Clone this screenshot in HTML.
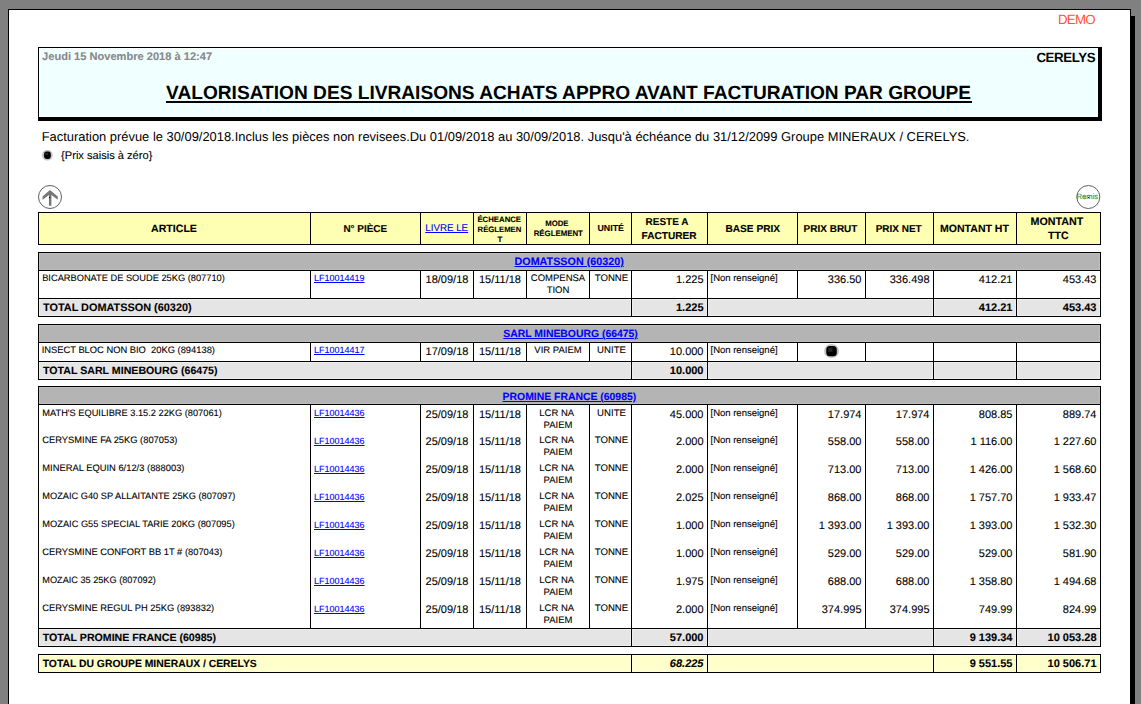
<!DOCTYPE html>
<html><head><meta charset="utf-8"><title>Valorisation</title>
<style>
html,body{margin:0;padding:0;}
body{width:1141px;height:704px;overflow:hidden;background:#808080;position:relative;font-family:"Liberation Sans", sans-serif;}
body div{position:absolute;}
.t{white-space:nowrap;line-height:1.15;text-rendering:geometricPrecision;}
</style></head><body>
<div style="left:8px;top:9px;width:1123px;height:704px;background:#fff;border:1px solid #000;box-sizing:border-box"></div>
<div style="left:1131px;top:16px;width:4px;height:700px;background:#000"></div>
<div style="left:38px;top:47px;width:1064px;height:74px;background:#F0FFFF;border-style:solid;border-color:#000;border-width:1px 4px 4px 1px;box-sizing:border-box;box-shadow:inset 1px 1px 0 #fff, inset -1px -1px 0 #fff"></div>
<div style="left:166px;top:101px;width:806px;height:2px;background:#000"></div>
<svg style="position:absolute;left:41px;top:149px" width="13" height="13" viewBox="0 0 13 13">
<ellipse cx="6.4" cy="6.2" rx="5.4" ry="5.4" fill="#c4c4c4"/>
<rect x="3.1" y="2.5" width="6.7" height="7.4" rx="2.4" fill="#000"/>
<rect x="4.2" y="3.6" width="3" height="2.6" fill="#262626"/>
</svg>
<svg style="position:absolute;left:37px;top:184px" width="26" height="26" viewBox="0 0 26 26">
<circle cx="13" cy="13" r="11.5" fill="none" stroke="#606060" stroke-width="1"/>
<path d="M12.94 6 L20.76 12.4 L20.76 15.8 L14.4 10.95 L14.4 21.75 L11.95 21.75 L11.95 10.95 L5.56 15.8 L5.56 12.4 Z" fill="#777"/>
<rect x="12" y="13" width="1.2" height="1.2" fill="#00f"/>
</svg>
<svg style="position:absolute;left:1075px;top:184px" width="26" height="26" viewBox="0 0 26 26">
<circle cx="13.3" cy="13" r="11.5" fill="none" stroke="#606060" stroke-width="1"/>
<rect x="13" y="13" width="1.2" height="1.2" fill="#00f"/>
</svg>
<div style="left:38px;top:212px;width:1062px;height:32px;background:#FFFFB4"></div>
<div style="left:38px;top:212px;width:1063px;height:1px;background:#000"></div>
<div style="left:38px;top:244px;width:1063px;height:1px;background:#000"></div>
<div style="left:38px;top:212px;width:1px;height:33px;background:#000"></div>
<div style="left:310px;top:212px;width:1px;height:33px;background:#000"></div>
<div style="left:420px;top:212px;width:1px;height:33px;background:#000"></div>
<div style="left:473px;top:212px;width:1px;height:33px;background:#000"></div>
<div style="left:526px;top:212px;width:1px;height:33px;background:#000"></div>
<div style="left:589px;top:212px;width:1px;height:33px;background:#000"></div>
<div style="left:631px;top:212px;width:1px;height:33px;background:#000"></div>
<div style="left:707px;top:212px;width:1px;height:33px;background:#000"></div>
<div style="left:797px;top:212px;width:1px;height:33px;background:#000"></div>
<div style="left:865px;top:212px;width:1px;height:33px;background:#000"></div>
<div style="left:933px;top:212px;width:1px;height:33px;background:#000"></div>
<div style="left:1016px;top:212px;width:1px;height:33px;background:#000"></div>
<div style="left:1100px;top:212px;width:1px;height:33px;background:#000"></div>
<div style="left:39px;top:253px;width:1061px;height:17px;background:#B4B4B4;box-shadow:inset 0 0 0 1px #bdbdbd"></div>
<div style="left:38px;top:252px;width:1063px;height:1px;background:#000"></div>
<div style="left:38px;top:270px;width:1063px;height:1px;background:#000"></div>
<div style="left:38px;top:252px;width:1px;height:19px;background:#000"></div>
<div style="left:1100px;top:252px;width:1px;height:19px;background:#000"></div>
<div style="left:38px;top:270px;width:1px;height:29px;background:#000"></div>
<div style="left:310px;top:270px;width:1px;height:29px;background:#000"></div>
<div style="left:420px;top:270px;width:1px;height:29px;background:#000"></div>
<div style="left:473px;top:270px;width:1px;height:29px;background:#000"></div>
<div style="left:526px;top:270px;width:1px;height:29px;background:#000"></div>
<div style="left:589px;top:270px;width:1px;height:29px;background:#000"></div>
<div style="left:631px;top:270px;width:1px;height:29px;background:#000"></div>
<div style="left:707px;top:270px;width:1px;height:29px;background:#000"></div>
<div style="left:797px;top:270px;width:1px;height:29px;background:#000"></div>
<div style="left:865px;top:270px;width:1px;height:29px;background:#000"></div>
<div style="left:933px;top:270px;width:1px;height:29px;background:#000"></div>
<div style="left:1016px;top:270px;width:1px;height:29px;background:#000"></div>
<div style="left:1100px;top:270px;width:1px;height:29px;background:#000"></div>
<div style="left:38px;top:298px;width:1063px;height:1px;background:#000"></div>
<div style="left:39px;top:299px;width:592px;height:17px;background:#E5E5E5;box-shadow:inset 0 0 0 1px #eeeeee"></div>
<div style="left:632px;top:299px;width:75px;height:17px;background:#E5E5E5;box-shadow:inset 0 0 0 1px #eeeeee"></div>
<div style="left:708px;top:299px;width:225px;height:17px;background:#E5E5E5;box-shadow:inset 0 0 0 1px #eeeeee"></div>
<div style="left:934px;top:299px;width:82px;height:17px;background:#E5E5E5;box-shadow:inset 0 0 0 1px #eeeeee"></div>
<div style="left:1017px;top:299px;width:83px;height:17px;background:#E5E5E5;box-shadow:inset 0 0 0 1px #eeeeee"></div>
<div style="left:38px;top:298px;width:1063px;height:1px;background:#000"></div>
<div style="left:38px;top:316px;width:1063px;height:1px;background:#000"></div>
<div style="left:38px;top:298px;width:1px;height:19px;background:#000"></div>
<div style="left:631px;top:298px;width:1px;height:19px;background:#000"></div>
<div style="left:707px;top:298px;width:1px;height:19px;background:#000"></div>
<div style="left:933px;top:298px;width:1px;height:19px;background:#000"></div>
<div style="left:1016px;top:298px;width:1px;height:19px;background:#000"></div>
<div style="left:1100px;top:298px;width:1px;height:19px;background:#000"></div>
<div style="left:39px;top:325px;width:1061px;height:17px;background:#B4B4B4;box-shadow:inset 0 0 0 1px #bdbdbd"></div>
<div style="left:38px;top:324px;width:1063px;height:1px;background:#000"></div>
<div style="left:38px;top:342px;width:1063px;height:1px;background:#000"></div>
<div style="left:38px;top:324px;width:1px;height:19px;background:#000"></div>
<div style="left:1100px;top:324px;width:1px;height:19px;background:#000"></div>
<div style="left:38px;top:342px;width:1px;height:20px;background:#000"></div>
<div style="left:310px;top:342px;width:1px;height:20px;background:#000"></div>
<div style="left:420px;top:342px;width:1px;height:20px;background:#000"></div>
<div style="left:473px;top:342px;width:1px;height:20px;background:#000"></div>
<div style="left:526px;top:342px;width:1px;height:20px;background:#000"></div>
<div style="left:589px;top:342px;width:1px;height:20px;background:#000"></div>
<div style="left:631px;top:342px;width:1px;height:20px;background:#000"></div>
<div style="left:707px;top:342px;width:1px;height:20px;background:#000"></div>
<div style="left:797px;top:342px;width:1px;height:20px;background:#000"></div>
<div style="left:865px;top:342px;width:1px;height:20px;background:#000"></div>
<div style="left:933px;top:342px;width:1px;height:20px;background:#000"></div>
<div style="left:1016px;top:342px;width:1px;height:20px;background:#000"></div>
<div style="left:1100px;top:342px;width:1px;height:20px;background:#000"></div>
<div style="left:38px;top:361px;width:1063px;height:1px;background:#000"></div>
<svg style="position:absolute;left:823px;top:342px" width="18" height="18" viewBox="0 0 18 18">
<ellipse cx="8.55" cy="9.0" rx="7.5" ry="7.1" fill="#c4c4c4"/>
<rect x="3.3" y="4.1" width="10.5" height="10.2" rx="3.6" fill="#000"/>
<rect x="5" y="5.8" width="4.6" height="4" fill="#262626"/>
</svg>
<div style="left:39px;top:362px;width:592px;height:17px;background:#E5E5E5;box-shadow:inset 0 0 0 1px #eeeeee"></div>
<div style="left:632px;top:362px;width:75px;height:17px;background:#E5E5E5;box-shadow:inset 0 0 0 1px #eeeeee"></div>
<div style="left:708px;top:362px;width:225px;height:17px;background:#E5E5E5;box-shadow:inset 0 0 0 1px #eeeeee"></div>
<div style="left:934px;top:362px;width:82px;height:17px;background:#E5E5E5;box-shadow:inset 0 0 0 1px #eeeeee"></div>
<div style="left:1017px;top:362px;width:83px;height:17px;background:#E5E5E5;box-shadow:inset 0 0 0 1px #eeeeee"></div>
<div style="left:38px;top:361px;width:1063px;height:1px;background:#000"></div>
<div style="left:38px;top:379px;width:1063px;height:1px;background:#000"></div>
<div style="left:38px;top:361px;width:1px;height:19px;background:#000"></div>
<div style="left:631px;top:361px;width:1px;height:19px;background:#000"></div>
<div style="left:707px;top:361px;width:1px;height:19px;background:#000"></div>
<div style="left:933px;top:361px;width:1px;height:19px;background:#000"></div>
<div style="left:1016px;top:361px;width:1px;height:19px;background:#000"></div>
<div style="left:1100px;top:361px;width:1px;height:19px;background:#000"></div>
<div style="left:39px;top:387px;width:1061px;height:17px;background:#B4B4B4;box-shadow:inset 0 0 0 1px #bdbdbd"></div>
<div style="left:38px;top:386px;width:1063px;height:1px;background:#000"></div>
<div style="left:38px;top:404px;width:1063px;height:1px;background:#000"></div>
<div style="left:38px;top:386px;width:1px;height:19px;background:#000"></div>
<div style="left:1100px;top:386px;width:1px;height:19px;background:#000"></div>
<div style="left:38px;top:404px;width:1px;height:29px;background:#000"></div>
<div style="left:310px;top:404px;width:1px;height:29px;background:#000"></div>
<div style="left:420px;top:404px;width:1px;height:29px;background:#000"></div>
<div style="left:473px;top:404px;width:1px;height:29px;background:#000"></div>
<div style="left:526px;top:404px;width:1px;height:29px;background:#000"></div>
<div style="left:589px;top:404px;width:1px;height:29px;background:#000"></div>
<div style="left:631px;top:404px;width:1px;height:29px;background:#000"></div>
<div style="left:707px;top:404px;width:1px;height:29px;background:#000"></div>
<div style="left:797px;top:404px;width:1px;height:29px;background:#000"></div>
<div style="left:865px;top:404px;width:1px;height:29px;background:#000"></div>
<div style="left:933px;top:404px;width:1px;height:29px;background:#000"></div>
<div style="left:1016px;top:404px;width:1px;height:29px;background:#000"></div>
<div style="left:1100px;top:404px;width:1px;height:29px;background:#000"></div>
<div style="left:38px;top:432px;width:1px;height:29px;background:#000"></div>
<div style="left:310px;top:432px;width:1px;height:29px;background:#000"></div>
<div style="left:420px;top:432px;width:1px;height:29px;background:#000"></div>
<div style="left:473px;top:432px;width:1px;height:29px;background:#000"></div>
<div style="left:526px;top:432px;width:1px;height:29px;background:#000"></div>
<div style="left:589px;top:432px;width:1px;height:29px;background:#000"></div>
<div style="left:631px;top:432px;width:1px;height:29px;background:#000"></div>
<div style="left:707px;top:432px;width:1px;height:29px;background:#000"></div>
<div style="left:797px;top:432px;width:1px;height:29px;background:#000"></div>
<div style="left:865px;top:432px;width:1px;height:29px;background:#000"></div>
<div style="left:933px;top:432px;width:1px;height:29px;background:#000"></div>
<div style="left:1016px;top:432px;width:1px;height:29px;background:#000"></div>
<div style="left:1100px;top:432px;width:1px;height:29px;background:#000"></div>
<div style="left:38px;top:460px;width:1px;height:29px;background:#000"></div>
<div style="left:310px;top:460px;width:1px;height:29px;background:#000"></div>
<div style="left:420px;top:460px;width:1px;height:29px;background:#000"></div>
<div style="left:473px;top:460px;width:1px;height:29px;background:#000"></div>
<div style="left:526px;top:460px;width:1px;height:29px;background:#000"></div>
<div style="left:589px;top:460px;width:1px;height:29px;background:#000"></div>
<div style="left:631px;top:460px;width:1px;height:29px;background:#000"></div>
<div style="left:707px;top:460px;width:1px;height:29px;background:#000"></div>
<div style="left:797px;top:460px;width:1px;height:29px;background:#000"></div>
<div style="left:865px;top:460px;width:1px;height:29px;background:#000"></div>
<div style="left:933px;top:460px;width:1px;height:29px;background:#000"></div>
<div style="left:1016px;top:460px;width:1px;height:29px;background:#000"></div>
<div style="left:1100px;top:460px;width:1px;height:29px;background:#000"></div>
<div style="left:38px;top:488px;width:1px;height:29px;background:#000"></div>
<div style="left:310px;top:488px;width:1px;height:29px;background:#000"></div>
<div style="left:420px;top:488px;width:1px;height:29px;background:#000"></div>
<div style="left:473px;top:488px;width:1px;height:29px;background:#000"></div>
<div style="left:526px;top:488px;width:1px;height:29px;background:#000"></div>
<div style="left:589px;top:488px;width:1px;height:29px;background:#000"></div>
<div style="left:631px;top:488px;width:1px;height:29px;background:#000"></div>
<div style="left:707px;top:488px;width:1px;height:29px;background:#000"></div>
<div style="left:797px;top:488px;width:1px;height:29px;background:#000"></div>
<div style="left:865px;top:488px;width:1px;height:29px;background:#000"></div>
<div style="left:933px;top:488px;width:1px;height:29px;background:#000"></div>
<div style="left:1016px;top:488px;width:1px;height:29px;background:#000"></div>
<div style="left:1100px;top:488px;width:1px;height:29px;background:#000"></div>
<div style="left:38px;top:516px;width:1px;height:29px;background:#000"></div>
<div style="left:310px;top:516px;width:1px;height:29px;background:#000"></div>
<div style="left:420px;top:516px;width:1px;height:29px;background:#000"></div>
<div style="left:473px;top:516px;width:1px;height:29px;background:#000"></div>
<div style="left:526px;top:516px;width:1px;height:29px;background:#000"></div>
<div style="left:589px;top:516px;width:1px;height:29px;background:#000"></div>
<div style="left:631px;top:516px;width:1px;height:29px;background:#000"></div>
<div style="left:707px;top:516px;width:1px;height:29px;background:#000"></div>
<div style="left:797px;top:516px;width:1px;height:29px;background:#000"></div>
<div style="left:865px;top:516px;width:1px;height:29px;background:#000"></div>
<div style="left:933px;top:516px;width:1px;height:29px;background:#000"></div>
<div style="left:1016px;top:516px;width:1px;height:29px;background:#000"></div>
<div style="left:1100px;top:516px;width:1px;height:29px;background:#000"></div>
<div style="left:38px;top:544px;width:1px;height:29px;background:#000"></div>
<div style="left:310px;top:544px;width:1px;height:29px;background:#000"></div>
<div style="left:420px;top:544px;width:1px;height:29px;background:#000"></div>
<div style="left:473px;top:544px;width:1px;height:29px;background:#000"></div>
<div style="left:526px;top:544px;width:1px;height:29px;background:#000"></div>
<div style="left:589px;top:544px;width:1px;height:29px;background:#000"></div>
<div style="left:631px;top:544px;width:1px;height:29px;background:#000"></div>
<div style="left:707px;top:544px;width:1px;height:29px;background:#000"></div>
<div style="left:797px;top:544px;width:1px;height:29px;background:#000"></div>
<div style="left:865px;top:544px;width:1px;height:29px;background:#000"></div>
<div style="left:933px;top:544px;width:1px;height:29px;background:#000"></div>
<div style="left:1016px;top:544px;width:1px;height:29px;background:#000"></div>
<div style="left:1100px;top:544px;width:1px;height:29px;background:#000"></div>
<div style="left:38px;top:572px;width:1px;height:29px;background:#000"></div>
<div style="left:310px;top:572px;width:1px;height:29px;background:#000"></div>
<div style="left:420px;top:572px;width:1px;height:29px;background:#000"></div>
<div style="left:473px;top:572px;width:1px;height:29px;background:#000"></div>
<div style="left:526px;top:572px;width:1px;height:29px;background:#000"></div>
<div style="left:589px;top:572px;width:1px;height:29px;background:#000"></div>
<div style="left:631px;top:572px;width:1px;height:29px;background:#000"></div>
<div style="left:707px;top:572px;width:1px;height:29px;background:#000"></div>
<div style="left:797px;top:572px;width:1px;height:29px;background:#000"></div>
<div style="left:865px;top:572px;width:1px;height:29px;background:#000"></div>
<div style="left:933px;top:572px;width:1px;height:29px;background:#000"></div>
<div style="left:1016px;top:572px;width:1px;height:29px;background:#000"></div>
<div style="left:1100px;top:572px;width:1px;height:29px;background:#000"></div>
<div style="left:38px;top:600px;width:1px;height:29px;background:#000"></div>
<div style="left:310px;top:600px;width:1px;height:29px;background:#000"></div>
<div style="left:420px;top:600px;width:1px;height:29px;background:#000"></div>
<div style="left:473px;top:600px;width:1px;height:29px;background:#000"></div>
<div style="left:526px;top:600px;width:1px;height:29px;background:#000"></div>
<div style="left:589px;top:600px;width:1px;height:29px;background:#000"></div>
<div style="left:631px;top:600px;width:1px;height:29px;background:#000"></div>
<div style="left:707px;top:600px;width:1px;height:29px;background:#000"></div>
<div style="left:797px;top:600px;width:1px;height:29px;background:#000"></div>
<div style="left:865px;top:600px;width:1px;height:29px;background:#000"></div>
<div style="left:933px;top:600px;width:1px;height:29px;background:#000"></div>
<div style="left:1016px;top:600px;width:1px;height:29px;background:#000"></div>
<div style="left:1100px;top:600px;width:1px;height:29px;background:#000"></div>
<div style="left:38px;top:628px;width:1063px;height:1px;background:#000"></div>
<div style="left:39px;top:629px;width:592px;height:17px;background:#E5E5E5;box-shadow:inset 0 0 0 1px #eeeeee"></div>
<div style="left:632px;top:629px;width:75px;height:17px;background:#E5E5E5;box-shadow:inset 0 0 0 1px #eeeeee"></div>
<div style="left:708px;top:629px;width:225px;height:17px;background:#E5E5E5;box-shadow:inset 0 0 0 1px #eeeeee"></div>
<div style="left:934px;top:629px;width:82px;height:17px;background:#E5E5E5;box-shadow:inset 0 0 0 1px #eeeeee"></div>
<div style="left:1017px;top:629px;width:83px;height:17px;background:#E5E5E5;box-shadow:inset 0 0 0 1px #eeeeee"></div>
<div style="left:38px;top:628px;width:1063px;height:1px;background:#000"></div>
<div style="left:38px;top:646px;width:1063px;height:1px;background:#000"></div>
<div style="left:38px;top:628px;width:1px;height:19px;background:#000"></div>
<div style="left:631px;top:628px;width:1px;height:19px;background:#000"></div>
<div style="left:707px;top:628px;width:1px;height:19px;background:#000"></div>
<div style="left:933px;top:628px;width:1px;height:19px;background:#000"></div>
<div style="left:1016px;top:628px;width:1px;height:19px;background:#000"></div>
<div style="left:1100px;top:628px;width:1px;height:19px;background:#000"></div>
<div style="left:39px;top:655px;width:592px;height:17px;background:#FFFFCC;box-shadow:inset 0 0 0 1px #ffffdd"></div>
<div style="left:632px;top:655px;width:75px;height:17px;background:#FFFFCC;box-shadow:inset 0 0 0 1px #ffffdd"></div>
<div style="left:708px;top:655px;width:225px;height:17px;background:#FFFFCC;box-shadow:inset 0 0 0 1px #ffffdd"></div>
<div style="left:934px;top:655px;width:82px;height:17px;background:#FFFFCC;box-shadow:inset 0 0 0 1px #ffffdd"></div>
<div style="left:1017px;top:655px;width:83px;height:17px;background:#FFFFCC;box-shadow:inset 0 0 0 1px #ffffdd"></div>
<div style="left:38px;top:654px;width:1063px;height:1px;background:#000"></div>
<div style="left:38px;top:672px;width:1063px;height:1px;background:#000"></div>
<div style="left:38px;top:654px;width:1px;height:19px;background:#000"></div>
<div style="left:631px;top:654px;width:1px;height:19px;background:#000"></div>
<div style="left:707px;top:654px;width:1px;height:19px;background:#000"></div>
<div style="left:933px;top:654px;width:1px;height:19px;background:#000"></div>
<div style="left:1016px;top:654px;width:1px;height:19px;background:#000"></div>
<div style="left:1100px;top:654px;width:1px;height:19px;background:#000"></div>
<div class="t" style="top:12px;font-size:13.3px;font-weight:400;color:#FF5533;left:1058px;letter-spacing:-0.75px;">DEMO</div>
<div class="t" style="top:51px;font-size:11.09px;font-weight:700;color:#888888;-webkit-text-stroke:0.1px #888888;left:42.1px;">Jeudi 15 Novembre 2018 à 12:47</div>
<div class="t" style="top:50px;font-size:13.3px;font-weight:700;color:#000;left:1036.4px;letter-spacing:-0.4px;">CERELYS</div>
<div class="t" style="top:83px;font-size:19.14px;font-weight:700;color:#000;left:166.1px;">VALORISATION DES LIVRAISONS ACHATS APPRO AVANT FACTURATION PAR GROUPE</div>
<div class="t" style="top:130px;font-size:12.92px;font-weight:400;color:#000;left:41.7px;">Facturation prévue le 30/09/2018.Inclus les pièces non revisees.Du 01/09/2018 au 30/09/2018. Jusqu'à échéance du 31/12/2099 Groupe MINERAUX / CERELYS.</div>
<div class="t" style="top:150px;font-size:11.1px;font-weight:400;color:#000;-webkit-text-stroke:0.1px #000;left:61.1px;">{Prix saisis à zéro}</div>
<div class="t" style="top:193px;font-size:7.66px;font-weight:400;color:#1e8c3c;-webkit-text-stroke:0.1px #1e8c3c;left:1076.5px;">Remis</div>
<div class="t" style="top:223px;font-size:10.59px;font-weight:700;color:#000;-webkit-text-stroke:0.1px #000;left:151.1px;">ARTICLE</div>
<div class="t" style="top:224px;font-size:9.93px;font-weight:700;color:#000;-webkit-text-stroke:0.1px #000;left:343.4px;">N° PIÈCE</div>
<div class="t" style="top:223px;font-size:9.75px;font-weight:400;color:#0000FF;-webkit-text-stroke:0.1px #0000FF;left:425.3px;text-decoration:underline;">LIVRE LE</div>
<div class="t" style="top:216px;font-size:7.79px;font-weight:700;color:#000;-webkit-text-stroke:0.1px #000;left:477.4px;">ÉCHEANCE</div>
<div class="t" style="top:226px;font-size:7.72px;font-weight:700;color:#000;-webkit-text-stroke:0.1px #000;left:477.6px;">RÉGLEMEN</div>
<div class="t" style="top:235px;font-size:8px;font-weight:700;color:#000;-webkit-text-stroke:0.1px #000;left:0.0px;width:1000px;text-align:center;">T</div>
<div class="t" style="top:220px;font-size:7.77px;font-weight:700;color:#000;-webkit-text-stroke:0.1px #000;left:545.25px;">MODE</div>
<div class="t" style="top:229px;font-size:7.84px;font-weight:700;color:#000;-webkit-text-stroke:0.1px #000;left:533.7px;">RÉGLEMENT</div>
<div class="t" style="top:223px;font-size:8.8px;font-weight:700;color:#000;-webkit-text-stroke:0.1px #000;left:597.5px;">UNITÉ</div>
<div class="t" style="top:217px;font-size:9.97px;font-weight:700;color:#000;-webkit-text-stroke:0.1px #000;left:645.6px;">RESTE A</div>
<div class="t" style="top:231px;font-size:10.12px;font-weight:700;color:#000;-webkit-text-stroke:0.1px #000;left:641.6px;">FACTURER</div>
<div class="t" style="top:224px;font-size:10.16px;font-weight:700;color:#000;-webkit-text-stroke:0.1px #000;left:725.4px;">BASE PRIX</div>
<div class="t" style="top:224px;font-size:9.99px;font-weight:700;color:#000;-webkit-text-stroke:0.1px #000;left:803.6px;">PRIX BRUT</div>
<div class="t" style="top:224px;font-size:9.97px;font-weight:700;color:#000;-webkit-text-stroke:0.1px #000;left:875.7px;">PRIX NET</div>
<div class="t" style="top:223px;font-size:10.55px;font-weight:700;color:#000;-webkit-text-stroke:0.1px #000;left:940.0px;">MONTANT HT</div>
<div class="t" style="top:216px;font-size:10.76px;font-weight:700;color:#000;-webkit-text-stroke:0.1px #000;left:1030.5px;">MONTANT</div>
<div class="t" style="top:230px;font-size:10.6px;font-weight:700;color:#000;-webkit-text-stroke:0.1px #000;left:1048.0px;">TTC</div>
<div class="t" style="top:256px;font-size:10.78px;font-weight:700;color:#0000FF;-webkit-text-stroke:0.1px #0000FF;left:514.5px;text-decoration:underline;">DOMATSSON (60320)</div>
<div class="t" style="top:273px;font-size:9.27px;font-weight:400;color:#000;-webkit-text-stroke:0.1px #000;left:42.2px;">BICARBONATE DE SOUDE 25KG (807710)</div>
<div class="t" style="top:273px;font-size:9px;font-weight:400;color:#0000FF;-webkit-text-stroke:0.1px #0000FF;left:314px;text-decoration:underline;">LF10014419</div>
<div class="t" style="top:274px;font-size:11px;font-weight:400;color:#000;-webkit-text-stroke:0.1px #000;left:-53.0px;width:1000px;text-align:center;">18/09/18</div>
<div class="t" style="top:274px;font-size:11px;font-weight:400;color:#000;-webkit-text-stroke:0.1px #000;left:0.0px;width:1000px;text-align:center;">15/11/18</div>
<div class="t" style="top:274px;font-size:9.5px;font-weight:400;color:#000;-webkit-text-stroke:0.1px #000;left:58.0px;width:1000px;text-align:center;">COMPENSA</div>
<div class="t" style="top:286px;font-size:9.5px;font-weight:400;color:#000;-webkit-text-stroke:0.1px #000;left:58.0px;width:1000px;text-align:center;">TION</div>
<div class="t" style="top:273px;font-size:9.6px;font-weight:400;color:#000;-webkit-text-stroke:0.1px #000;left:111.5px;width:1000px;text-align:center;">TONNE</div>
<div class="t" style="top:274px;font-size:9.5px;font-weight:400;color:#000;-webkit-text-stroke:0.1px #000;left:710.5px;">[Non renseigné]</div>
<div class="t" style="top:274px;font-size:11px;font-weight:400;color:#000;-webkit-text-stroke:0.1px #000;right:437.5px;text-align:right;">1.225</div>
<div class="t" style="top:274px;font-size:11px;font-weight:400;color:#000;-webkit-text-stroke:0.1px #000;right:279.5px;text-align:right;">336.50</div>
<div class="t" style="top:274px;font-size:11px;font-weight:400;color:#000;-webkit-text-stroke:0.1px #000;right:211.5px;text-align:right;">336.498</div>
<div class="t" style="top:274px;font-size:11px;font-weight:400;color:#000;-webkit-text-stroke:0.1px #000;right:128.5px;text-align:right;">412.21</div>
<div class="t" style="top:274px;font-size:11px;font-weight:400;color:#000;-webkit-text-stroke:0.1px #000;right:44.5px;text-align:right;">453.43</div>
<div class="t" style="top:302px;font-size:10.9px;font-weight:700;color:#000;-webkit-text-stroke:0.1px #000;left:43.0px;">TOTAL DOMATSSON (60320)</div>
<div class="t" style="top:302px;font-size:11px;font-weight:700;color:#000;-webkit-text-stroke:0.1px #000;right:437.5px;text-align:right;">1.225</div>
<div class="t" style="top:302px;font-size:11px;font-weight:700;color:#000;-webkit-text-stroke:0.1px #000;right:128.5px;text-align:right;">412.21</div>
<div class="t" style="top:302px;font-size:11px;font-weight:700;color:#000;-webkit-text-stroke:0.1px #000;right:44.5px;text-align:right;">453.43</div>
<div class="t" style="top:329px;font-size:10.41px;font-weight:700;color:#0000FF;-webkit-text-stroke:0.1px #0000FF;left:503.3px;text-decoration:underline;">SARL MINEBOURG (66475)</div>
<div class="t" style="top:345px;font-size:9.36px;font-weight:400;color:#000;-webkit-text-stroke:0.1px #000;left:41.7px;">INSECT BLOC NON BIO&nbsp; 20KG (894138)</div>
<div class="t" style="top:345px;font-size:9px;font-weight:400;color:#0000FF;-webkit-text-stroke:0.1px #0000FF;left:314px;text-decoration:underline;">LF10014417</div>
<div class="t" style="top:346px;font-size:11px;font-weight:400;color:#000;-webkit-text-stroke:0.1px #000;left:-53.0px;width:1000px;text-align:center;">17/09/18</div>
<div class="t" style="top:346px;font-size:11px;font-weight:400;color:#000;-webkit-text-stroke:0.1px #000;left:0.0px;width:1000px;text-align:center;">15/11/18</div>
<div class="t" style="top:346px;font-size:9.5px;font-weight:400;color:#000;-webkit-text-stroke:0.1px #000;left:58.0px;width:1000px;text-align:center;">VIR PAIEM</div>
<div class="t" style="top:345px;font-size:9.6px;font-weight:400;color:#000;-webkit-text-stroke:0.1px #000;left:111.5px;width:1000px;text-align:center;">UNITE</div>
<div class="t" style="top:346px;font-size:9.5px;font-weight:400;color:#000;-webkit-text-stroke:0.1px #000;left:710.5px;">[Non renseigné]</div>
<div class="t" style="top:346px;font-size:11px;font-weight:400;color:#000;-webkit-text-stroke:0.1px #000;right:437.5px;text-align:right;">10.000</div>
<div class="t" style="top:365px;font-size:10.64px;font-weight:700;color:#000;-webkit-text-stroke:0.1px #000;left:43.0px;">TOTAL SARL MINEBOURG (66475)</div>
<div class="t" style="top:365px;font-size:11px;font-weight:700;color:#000;-webkit-text-stroke:0.1px #000;right:437.5px;text-align:right;">10.000</div>
<div class="t" style="top:392px;font-size:10.42px;font-weight:700;color:#0000FF;-webkit-text-stroke:0.1px #0000FF;left:502.6px;text-decoration:underline;">PROMINE FRANCE (60985)</div>
<div class="t" style="top:408px;font-size:9.26px;font-weight:400;color:#000;-webkit-text-stroke:0.1px #000;left:42.3px;">MATH'S EQUILIBRE 3.15.2 22KG (807061)</div>
<div class="t" style="top:408px;font-size:9px;font-weight:400;color:#0000FF;-webkit-text-stroke:0.1px #0000FF;left:314px;text-decoration:underline;">LF10014436</div>
<div class="t" style="top:409px;font-size:11px;font-weight:400;color:#000;-webkit-text-stroke:0.1px #000;left:-53.0px;width:1000px;text-align:center;">25/09/18</div>
<div class="t" style="top:409px;font-size:11px;font-weight:400;color:#000;-webkit-text-stroke:0.1px #000;left:0.0px;width:1000px;text-align:center;">15/11/18</div>
<div class="t" style="top:409px;font-size:9.5px;font-weight:400;color:#000;-webkit-text-stroke:0.1px #000;left:56.700000000000045px;width:1000px;text-align:center;">LCR NA</div>
<div class="t" style="top:421px;font-size:9.5px;font-weight:400;color:#000;-webkit-text-stroke:0.1px #000;left:58.0px;width:1000px;text-align:center;">PAIEM</div>
<div class="t" style="top:408px;font-size:9.6px;font-weight:400;color:#000;-webkit-text-stroke:0.1px #000;left:111.5px;width:1000px;text-align:center;">UNITE</div>
<div class="t" style="top:409px;font-size:9.5px;font-weight:400;color:#000;-webkit-text-stroke:0.1px #000;left:710.5px;">[Non renseigné]</div>
<div class="t" style="top:409px;font-size:11px;font-weight:400;color:#000;-webkit-text-stroke:0.1px #000;right:437.5px;text-align:right;">45.000</div>
<div class="t" style="top:409px;font-size:11px;font-weight:400;color:#000;-webkit-text-stroke:0.1px #000;right:279.5px;text-align:right;">17.974</div>
<div class="t" style="top:409px;font-size:11px;font-weight:400;color:#000;-webkit-text-stroke:0.1px #000;right:211.5px;text-align:right;">17.974</div>
<div class="t" style="top:409px;font-size:11px;font-weight:400;color:#000;-webkit-text-stroke:0.1px #000;right:128.5px;text-align:right;">808.85</div>
<div class="t" style="top:409px;font-size:11px;font-weight:400;color:#000;-webkit-text-stroke:0.1px #000;right:44.5px;text-align:right;">889.74</div>
<div class="t" style="top:435px;font-size:9.33px;font-weight:400;color:#000;-webkit-text-stroke:0.1px #000;left:42.3px;">CERYSMINE FA 25KG (807053)</div>
<div class="t" style="top:436px;font-size:9px;font-weight:400;color:#0000FF;-webkit-text-stroke:0.1px #0000FF;left:314px;text-decoration:underline;">LF10014436</div>
<div class="t" style="top:436px;font-size:11px;font-weight:400;color:#000;-webkit-text-stroke:0.1px #000;left:-53.0px;width:1000px;text-align:center;">25/09/18</div>
<div class="t" style="top:436px;font-size:11px;font-weight:400;color:#000;-webkit-text-stroke:0.1px #000;left:0.0px;width:1000px;text-align:center;">15/11/18</div>
<div class="t" style="top:436px;font-size:9.5px;font-weight:400;color:#000;-webkit-text-stroke:0.1px #000;left:56.700000000000045px;width:1000px;text-align:center;">LCR NA</div>
<div class="t" style="top:448px;font-size:9.5px;font-weight:400;color:#000;-webkit-text-stroke:0.1px #000;left:58.0px;width:1000px;text-align:center;">PAIEM</div>
<div class="t" style="top:435px;font-size:9.6px;font-weight:400;color:#000;-webkit-text-stroke:0.1px #000;left:111.5px;width:1000px;text-align:center;">TONNE</div>
<div class="t" style="top:436px;font-size:9.5px;font-weight:400;color:#000;-webkit-text-stroke:0.1px #000;left:710.5px;">[Non renseigné]</div>
<div class="t" style="top:436px;font-size:11px;font-weight:400;color:#000;-webkit-text-stroke:0.1px #000;right:437.5px;text-align:right;">2.000</div>
<div class="t" style="top:436px;font-size:11px;font-weight:400;color:#000;-webkit-text-stroke:0.1px #000;right:279.5px;text-align:right;">558.00</div>
<div class="t" style="top:436px;font-size:11px;font-weight:400;color:#000;-webkit-text-stroke:0.1px #000;right:211.5px;text-align:right;">558.00</div>
<div class="t" style="top:436px;font-size:11px;font-weight:400;color:#000;-webkit-text-stroke:0.1px #000;right:128.5px;text-align:right;">1 116.00</div>
<div class="t" style="top:436px;font-size:11px;font-weight:400;color:#000;-webkit-text-stroke:0.1px #000;right:44.5px;text-align:right;">1 227.60</div>
<div class="t" style="top:463px;font-size:9.37px;font-weight:400;color:#000;-webkit-text-stroke:0.1px #000;left:42.3px;">MINERAL EQUIN 6/12/3 (888003)</div>
<div class="t" style="top:464px;font-size:9px;font-weight:400;color:#0000FF;-webkit-text-stroke:0.1px #0000FF;left:314px;text-decoration:underline;">LF10014436</div>
<div class="t" style="top:464px;font-size:11px;font-weight:400;color:#000;-webkit-text-stroke:0.1px #000;left:-53.0px;width:1000px;text-align:center;">25/09/18</div>
<div class="t" style="top:464px;font-size:11px;font-weight:400;color:#000;-webkit-text-stroke:0.1px #000;left:0.0px;width:1000px;text-align:center;">15/11/18</div>
<div class="t" style="top:464px;font-size:9.5px;font-weight:400;color:#000;-webkit-text-stroke:0.1px #000;left:56.700000000000045px;width:1000px;text-align:center;">LCR NA</div>
<div class="t" style="top:476px;font-size:9.5px;font-weight:400;color:#000;-webkit-text-stroke:0.1px #000;left:58.0px;width:1000px;text-align:center;">PAIEM</div>
<div class="t" style="top:463px;font-size:9.6px;font-weight:400;color:#000;-webkit-text-stroke:0.1px #000;left:111.5px;width:1000px;text-align:center;">TONNE</div>
<div class="t" style="top:464px;font-size:9.5px;font-weight:400;color:#000;-webkit-text-stroke:0.1px #000;left:710.5px;">[Non renseigné]</div>
<div class="t" style="top:464px;font-size:11px;font-weight:400;color:#000;-webkit-text-stroke:0.1px #000;right:437.5px;text-align:right;">2.000</div>
<div class="t" style="top:464px;font-size:11px;font-weight:400;color:#000;-webkit-text-stroke:0.1px #000;right:279.5px;text-align:right;">713.00</div>
<div class="t" style="top:464px;font-size:11px;font-weight:400;color:#000;-webkit-text-stroke:0.1px #000;right:211.5px;text-align:right;">713.00</div>
<div class="t" style="top:464px;font-size:11px;font-weight:400;color:#000;-webkit-text-stroke:0.1px #000;right:128.5px;text-align:right;">1 426.00</div>
<div class="t" style="top:464px;font-size:11px;font-weight:400;color:#000;-webkit-text-stroke:0.1px #000;right:44.5px;text-align:right;">1 568.60</div>
<div class="t" style="top:491px;font-size:9.24px;font-weight:400;color:#000;-webkit-text-stroke:0.1px #000;left:42.3px;">MOZAIC G40 SP ALLAITANTE 25KG (807097)</div>
<div class="t" style="top:492px;font-size:9px;font-weight:400;color:#0000FF;-webkit-text-stroke:0.1px #0000FF;left:314px;text-decoration:underline;">LF10014436</div>
<div class="t" style="top:492px;font-size:11px;font-weight:400;color:#000;-webkit-text-stroke:0.1px #000;left:-53.0px;width:1000px;text-align:center;">25/09/18</div>
<div class="t" style="top:492px;font-size:11px;font-weight:400;color:#000;-webkit-text-stroke:0.1px #000;left:0.0px;width:1000px;text-align:center;">15/11/18</div>
<div class="t" style="top:492px;font-size:9.5px;font-weight:400;color:#000;-webkit-text-stroke:0.1px #000;left:56.700000000000045px;width:1000px;text-align:center;">LCR NA</div>
<div class="t" style="top:504px;font-size:9.5px;font-weight:400;color:#000;-webkit-text-stroke:0.1px #000;left:58.0px;width:1000px;text-align:center;">PAIEM</div>
<div class="t" style="top:491px;font-size:9.6px;font-weight:400;color:#000;-webkit-text-stroke:0.1px #000;left:111.5px;width:1000px;text-align:center;">TONNE</div>
<div class="t" style="top:492px;font-size:9.5px;font-weight:400;color:#000;-webkit-text-stroke:0.1px #000;left:710.5px;">[Non renseigné]</div>
<div class="t" style="top:492px;font-size:11px;font-weight:400;color:#000;-webkit-text-stroke:0.1px #000;right:437.5px;text-align:right;">2.025</div>
<div class="t" style="top:492px;font-size:11px;font-weight:400;color:#000;-webkit-text-stroke:0.1px #000;right:279.5px;text-align:right;">868.00</div>
<div class="t" style="top:492px;font-size:11px;font-weight:400;color:#000;-webkit-text-stroke:0.1px #000;right:211.5px;text-align:right;">868.00</div>
<div class="t" style="top:492px;font-size:11px;font-weight:400;color:#000;-webkit-text-stroke:0.1px #000;right:128.5px;text-align:right;">1 757.70</div>
<div class="t" style="top:492px;font-size:11px;font-weight:400;color:#000;-webkit-text-stroke:0.1px #000;right:44.5px;text-align:right;">1 933.47</div>
<div class="t" style="top:519px;font-size:9.28px;font-weight:400;color:#000;-webkit-text-stroke:0.1px #000;left:42.3px;">MOZAIC G55 SPECIAL TARIE 20KG (807095)</div>
<div class="t" style="top:520px;font-size:9px;font-weight:400;color:#0000FF;-webkit-text-stroke:0.1px #0000FF;left:314px;text-decoration:underline;">LF10014436</div>
<div class="t" style="top:520px;font-size:11px;font-weight:400;color:#000;-webkit-text-stroke:0.1px #000;left:-53.0px;width:1000px;text-align:center;">25/09/18</div>
<div class="t" style="top:520px;font-size:11px;font-weight:400;color:#000;-webkit-text-stroke:0.1px #000;left:0.0px;width:1000px;text-align:center;">15/11/18</div>
<div class="t" style="top:520px;font-size:9.5px;font-weight:400;color:#000;-webkit-text-stroke:0.1px #000;left:56.700000000000045px;width:1000px;text-align:center;">LCR NA</div>
<div class="t" style="top:532px;font-size:9.5px;font-weight:400;color:#000;-webkit-text-stroke:0.1px #000;left:58.0px;width:1000px;text-align:center;">PAIEM</div>
<div class="t" style="top:519px;font-size:9.6px;font-weight:400;color:#000;-webkit-text-stroke:0.1px #000;left:111.5px;width:1000px;text-align:center;">TONNE</div>
<div class="t" style="top:520px;font-size:9.5px;font-weight:400;color:#000;-webkit-text-stroke:0.1px #000;left:710.5px;">[Non renseigné]</div>
<div class="t" style="top:520px;font-size:11px;font-weight:400;color:#000;-webkit-text-stroke:0.1px #000;right:437.5px;text-align:right;">1.000</div>
<div class="t" style="top:520px;font-size:11px;font-weight:400;color:#000;-webkit-text-stroke:0.1px #000;right:279.5px;text-align:right;">1 393.00</div>
<div class="t" style="top:520px;font-size:11px;font-weight:400;color:#000;-webkit-text-stroke:0.1px #000;right:211.5px;text-align:right;">1 393.00</div>
<div class="t" style="top:520px;font-size:11px;font-weight:400;color:#000;-webkit-text-stroke:0.1px #000;right:128.5px;text-align:right;">1 393.00</div>
<div class="t" style="top:520px;font-size:11px;font-weight:400;color:#000;-webkit-text-stroke:0.1px #000;right:44.5px;text-align:right;">1 532.30</div>
<div class="t" style="top:547px;font-size:9.35px;font-weight:400;color:#000;-webkit-text-stroke:0.1px #000;left:42.3px;">CERYSMINE CONFORT BB 1T # (807043)</div>
<div class="t" style="top:548px;font-size:9px;font-weight:400;color:#0000FF;-webkit-text-stroke:0.1px #0000FF;left:314px;text-decoration:underline;">LF10014436</div>
<div class="t" style="top:548px;font-size:11px;font-weight:400;color:#000;-webkit-text-stroke:0.1px #000;left:-53.0px;width:1000px;text-align:center;">25/09/18</div>
<div class="t" style="top:548px;font-size:11px;font-weight:400;color:#000;-webkit-text-stroke:0.1px #000;left:0.0px;width:1000px;text-align:center;">15/11/18</div>
<div class="t" style="top:548px;font-size:9.5px;font-weight:400;color:#000;-webkit-text-stroke:0.1px #000;left:56.700000000000045px;width:1000px;text-align:center;">LCR NA</div>
<div class="t" style="top:560px;font-size:9.5px;font-weight:400;color:#000;-webkit-text-stroke:0.1px #000;left:58.0px;width:1000px;text-align:center;">PAIEM</div>
<div class="t" style="top:547px;font-size:9.6px;font-weight:400;color:#000;-webkit-text-stroke:0.1px #000;left:111.5px;width:1000px;text-align:center;">TONNE</div>
<div class="t" style="top:548px;font-size:9.5px;font-weight:400;color:#000;-webkit-text-stroke:0.1px #000;left:710.5px;">[Non renseigné]</div>
<div class="t" style="top:548px;font-size:11px;font-weight:400;color:#000;-webkit-text-stroke:0.1px #000;right:437.5px;text-align:right;">1.000</div>
<div class="t" style="top:548px;font-size:11px;font-weight:400;color:#000;-webkit-text-stroke:0.1px #000;right:279.5px;text-align:right;">529.00</div>
<div class="t" style="top:548px;font-size:11px;font-weight:400;color:#000;-webkit-text-stroke:0.1px #000;right:211.5px;text-align:right;">529.00</div>
<div class="t" style="top:548px;font-size:11px;font-weight:400;color:#000;-webkit-text-stroke:0.1px #000;right:128.5px;text-align:right;">529.00</div>
<div class="t" style="top:548px;font-size:11px;font-weight:400;color:#000;-webkit-text-stroke:0.1px #000;right:44.5px;text-align:right;">581.90</div>
<div class="t" style="top:575px;font-size:9.16px;font-weight:400;color:#000;-webkit-text-stroke:0.1px #000;left:42.3px;">MOZAIC 35 25KG (807092)</div>
<div class="t" style="top:576px;font-size:9px;font-weight:400;color:#0000FF;-webkit-text-stroke:0.1px #0000FF;left:314px;text-decoration:underline;">LF10014436</div>
<div class="t" style="top:576px;font-size:11px;font-weight:400;color:#000;-webkit-text-stroke:0.1px #000;left:-53.0px;width:1000px;text-align:center;">25/09/18</div>
<div class="t" style="top:576px;font-size:11px;font-weight:400;color:#000;-webkit-text-stroke:0.1px #000;left:0.0px;width:1000px;text-align:center;">15/11/18</div>
<div class="t" style="top:576px;font-size:9.5px;font-weight:400;color:#000;-webkit-text-stroke:0.1px #000;left:56.700000000000045px;width:1000px;text-align:center;">LCR NA</div>
<div class="t" style="top:588px;font-size:9.5px;font-weight:400;color:#000;-webkit-text-stroke:0.1px #000;left:58.0px;width:1000px;text-align:center;">PAIEM</div>
<div class="t" style="top:575px;font-size:9.6px;font-weight:400;color:#000;-webkit-text-stroke:0.1px #000;left:111.5px;width:1000px;text-align:center;">TONNE</div>
<div class="t" style="top:576px;font-size:9.5px;font-weight:400;color:#000;-webkit-text-stroke:0.1px #000;left:710.5px;">[Non renseigné]</div>
<div class="t" style="top:576px;font-size:11px;font-weight:400;color:#000;-webkit-text-stroke:0.1px #000;right:437.5px;text-align:right;">1.975</div>
<div class="t" style="top:576px;font-size:11px;font-weight:400;color:#000;-webkit-text-stroke:0.1px #000;right:279.5px;text-align:right;">688.00</div>
<div class="t" style="top:576px;font-size:11px;font-weight:400;color:#000;-webkit-text-stroke:0.1px #000;right:211.5px;text-align:right;">688.00</div>
<div class="t" style="top:576px;font-size:11px;font-weight:400;color:#000;-webkit-text-stroke:0.1px #000;right:128.5px;text-align:right;">1 358.80</div>
<div class="t" style="top:576px;font-size:11px;font-weight:400;color:#000;-webkit-text-stroke:0.1px #000;right:44.5px;text-align:right;">1 494.68</div>
<div class="t" style="top:603px;font-size:9.35px;font-weight:400;color:#000;-webkit-text-stroke:0.1px #000;left:42.3px;">CERYSMINE REGUL PH 25KG (893832)</div>
<div class="t" style="top:604px;font-size:9px;font-weight:400;color:#0000FF;-webkit-text-stroke:0.1px #0000FF;left:314px;text-decoration:underline;">LF10014436</div>
<div class="t" style="top:604px;font-size:11px;font-weight:400;color:#000;-webkit-text-stroke:0.1px #000;left:-53.0px;width:1000px;text-align:center;">25/09/18</div>
<div class="t" style="top:604px;font-size:11px;font-weight:400;color:#000;-webkit-text-stroke:0.1px #000;left:0.0px;width:1000px;text-align:center;">15/11/18</div>
<div class="t" style="top:604px;font-size:9.5px;font-weight:400;color:#000;-webkit-text-stroke:0.1px #000;left:56.700000000000045px;width:1000px;text-align:center;">LCR NA</div>
<div class="t" style="top:616px;font-size:9.5px;font-weight:400;color:#000;-webkit-text-stroke:0.1px #000;left:58.0px;width:1000px;text-align:center;">PAIEM</div>
<div class="t" style="top:603px;font-size:9.6px;font-weight:400;color:#000;-webkit-text-stroke:0.1px #000;left:111.5px;width:1000px;text-align:center;">TONNE</div>
<div class="t" style="top:604px;font-size:9.5px;font-weight:400;color:#000;-webkit-text-stroke:0.1px #000;left:710.5px;">[Non renseigné]</div>
<div class="t" style="top:604px;font-size:11px;font-weight:400;color:#000;-webkit-text-stroke:0.1px #000;right:437.5px;text-align:right;">2.000</div>
<div class="t" style="top:604px;font-size:11px;font-weight:400;color:#000;-webkit-text-stroke:0.1px #000;right:279.5px;text-align:right;">374.995</div>
<div class="t" style="top:604px;font-size:11px;font-weight:400;color:#000;-webkit-text-stroke:0.1px #000;right:211.5px;text-align:right;">374.995</div>
<div class="t" style="top:604px;font-size:11px;font-weight:400;color:#000;-webkit-text-stroke:0.1px #000;right:128.5px;text-align:right;">749.99</div>
<div class="t" style="top:604px;font-size:11px;font-weight:400;color:#000;-webkit-text-stroke:0.1px #000;right:44.5px;text-align:right;">824.99</div>
<div class="t" style="top:632px;font-size:10.61px;font-weight:700;color:#000;-webkit-text-stroke:0.1px #000;left:42.7px;">TOTAL PROMINE FRANCE (60985)</div>
<div class="t" style="top:632px;font-size:11px;font-weight:700;color:#000;-webkit-text-stroke:0.1px #000;right:437.5px;text-align:right;">57.000</div>
<div class="t" style="top:632px;font-size:11px;font-weight:700;color:#000;-webkit-text-stroke:0.1px #000;right:128.5px;text-align:right;">9 139.34</div>
<div class="t" style="top:632px;font-size:11px;font-weight:700;color:#000;-webkit-text-stroke:0.1px #000;right:44.5px;text-align:right;">10 053.28</div>
<div class="t" style="top:659px;font-size:10.39px;font-weight:700;color:#000;-webkit-text-stroke:0.1px #000;left:42.7px;">TOTAL DU GROUPE MINERAUX / CERELYS</div>
<div class="t" style="top:658px;font-size:11px;font-weight:700;color:#000;-webkit-text-stroke:0.1px #000;font-style:italic;right:437.5px;text-align:right;">68.225</div>
<div class="t" style="top:658px;font-size:11px;font-weight:700;color:#000;-webkit-text-stroke:0.1px #000;right:128.5px;text-align:right;">9 551.55</div>
<div class="t" style="top:658px;font-size:11px;font-weight:700;color:#000;-webkit-text-stroke:0.1px #000;right:44.5px;text-align:right;">10 506.71</div>
</body></html>
